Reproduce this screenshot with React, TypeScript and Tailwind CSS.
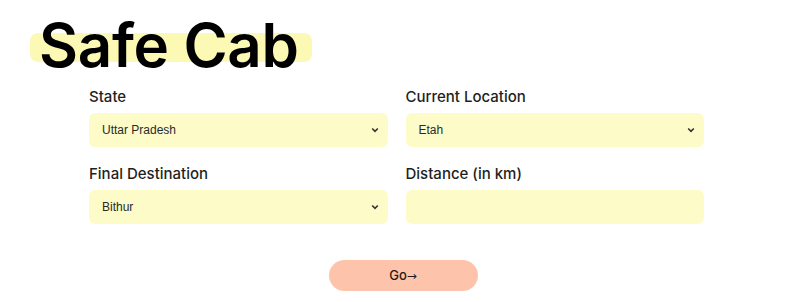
import React from 'react';

const Field = ({ label, value }: { label: string; value?: string }) => (
  <div className="flex flex-col">
    <label className="text-[15px] leading-[20px] font-medium text-[#1f1f1f] font-['Inter',sans-serif] mb-[6px]">
      {label}
    </label>
    {value !== undefined ? (
      <div className="h-[34px] rounded-md bg-[#fdfcc9] flex items-center justify-between pl-[13px] pr-[9px]">
        <span className="text-[12px] text-[#2a2a2a] font-['Liberation_Sans',Arial,sans-serif]">{value}</span>
        <svg width="8" height="6" viewBox="0 0 8 6" className="text-[#333]">
          <path d="M1.2 1.5 L4 4.3 L6.8 1.5" fill="none" stroke="currentColor" strokeWidth="1.6" />
        </svg>
      </div>
    ) : (
      <div className="h-[34px] rounded-md bg-[#fdfcc9]" />
    )}
  </div>
);

export default function App() {
  return (
    <div className="w-[806px] h-[302px] bg-white overflow-hidden">
      {/* Title */}
      <div className="pt-[13px] pl-[30px]">
        <div className="relative inline-block">
          <div className="absolute left-0 top-[20px] w-[282px] h-[29px] rounded-lg bg-[#fbf9b3]" />
          <h1 className="relative pl-[9px] text-[60px] leading-[64px] font-semibold text-black font-['Inter',sans-serif] tracking-[-0.3px]">
            Safe Cab
          </h1>
        </div>
      </div>

      {/* Form */}
      <div className="ml-[89px] w-[615px] mt-[10px] grid grid-cols-2 gap-x-[18px] gap-y-[17px]">
        <Field label="State" value="Uttar Pradesh" />
        <Field label="Current Location" value="Etah" />
        <Field label="Final Destination" value="Bithur" />
        <Field label="Distance (in km)" />
      </div>

      <div className="flex justify-center mt-[36px]">
        <button className="w-[149px] h-[31px] rounded-full bg-[#fec4ab] text-[13px] font-medium text-[#2a1a14] font-['Inter',sans-serif]">
          Go<span className="font-['DejaVu_Sans',sans-serif] font-normal text-[12px]">→</span>
        </button>
      </div>
    </div>
  );
}
